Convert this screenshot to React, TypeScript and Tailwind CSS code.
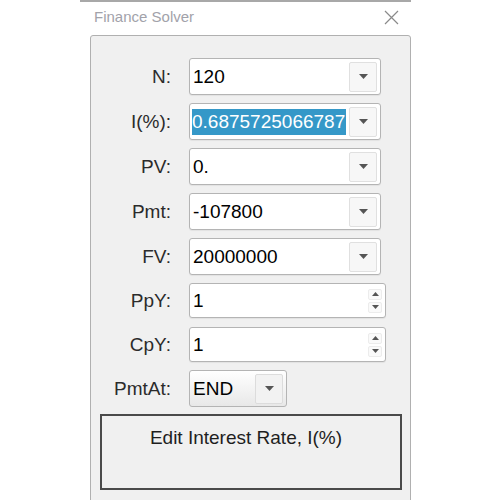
import React from 'react';

const Caret = ({ up = false, w = 9, h = 5 }: { up?: boolean; w?: number; h?: number }) => (
  <svg width={w} height={h} viewBox={`0 0 ${w} ${h}`}>
    <polygon points={up ? `0,${h} ${w},${h} ${w / 2},0` : `0,0 ${w},0 ${w / 2},${h}`} fill="#555" />
  </svg>
);

const Label = ({ text }: { text: string }) => (
  <div className="w-[80px] text-right text-[19px] leading-none text-[#2b2b2b]">{text}</div>
);

const DropField = ({ label, value, selected = false }: { label: string; value: string; selected?: boolean }) => (
  <div className="flex items-center h-[37px]">
    <Label text={label} />
    <div className="ml-[18px] h-[37px] w-[192px] bg-white border border-[#b4b4b4] rounded-[3px] shadow-[0_1px_1px_rgba(0,0,0,0.06)] flex items-center pl-[2px] pr-[3px]">
      <div className="flex-1 mr-[3px] overflow-hidden whitespace-nowrap text-[19px] leading-none text-black">
        {selected ? (
          <div className="h-[26px] bg-[#3598c8] text-white flex items-center overflow-hidden">{value}</div>
        ) : (
          <div className="pl-[1px]">{value}</div>
        )}
      </div>
      <div className="w-[28px] h-[30px] bg-[#f7f7f7] border border-[#e0e0e0] rounded-[2px] flex items-center justify-center">
        <Caret />
      </div>
    </div>
  </div>
);

const SpinField = ({ label, value }: { label: string; value: string }) => (
  <div className="flex items-center h-[35px]">
    <Label text={label} />
    <div className="ml-[18px] h-[35px] w-[197px] bg-white border border-[#b4b4b4] rounded-[3px] shadow-[0_1px_1px_rgba(0,0,0,0.06)] flex items-center pl-[3px] pr-[3px]">
      <div className="flex-1 text-[19px] leading-none text-black">{value}</div>
      <div className="w-[14px] flex flex-col gap-[2px]">
        <div className="h-[11px] border border-[#ececec] rounded-[2px] bg-[#fafafa] flex items-center justify-center">
          <Caret up w={7} h={4} />
        </div>
        <div className="h-[11px] border border-[#ececec] rounded-[2px] bg-[#fafafa] flex items-center justify-center">
          <Caret w={7} h={4} />
        </div>
      </div>
    </div>
  </div>
);

export default function App() {
  return (
    <div className="w-[500px] h-[500px] bg-white overflow-hidden font-['Liberation_Sans',Arial,sans-serif]">
      <div className="ml-[80px] w-[331px] border-t-2 border-[#a8a8a8]">
        <div className="h-[33px] flex items-center justify-between pl-[14px] pr-[12px] pb-[3px]">
          <span className="text-[15px] text-[#a2a2aa]">Finance Solver</span>
          <svg width="15" height="15" viewBox="0 0 15 15">
            <path d="M1 1 L14 14 M14 1 L1 14" stroke="#8a8a8a" strokeWidth="1.2" fill="none" />
          </svg>
        </div>
        <div className="ml-[10px] h-[470px] border border-[#b0b0b0] rounded-t-[3px] bg-[#f0f0f0] pt-[22px]">
          <div className="flex flex-col gap-2">
            <DropField label="N:" value="120" />
            <DropField label="I(%):" value="0.6875725066787" selected />
            <DropField label="PV:" value="0." />
            <DropField label="Pmt:" value="-107800" />
            <DropField label="FV:" value="20000000" />
            <SpinField label="PpY:" value="1" />
            <div className="mt-[1px]">
              <SpinField label="CpY:" value="1" />
            </div>
            <div className="flex items-center h-[37px]">
              <Label text="PmtAt:" />
              <div className="ml-[18px] h-[37px] w-[98px] border border-[#b4b4b4] rounded-[3px] bg-gradient-to-b from-white to-[#e8e8e8] flex items-center pl-[3px] pr-[3px]">
                <div className="flex-1 text-[19px] leading-none text-black">END</div>
                <div className="w-[28px] h-[30px] bg-[#f2f2f2] border border-[#dcdcdc] rounded-[2px] flex items-center justify-center">
                  <Caret />
                </div>
              </div>
            </div>
          </div>
          <div className="ml-[9px] mt-[7px] w-[302px] h-[76px] border-2 border-[#4a4a4a] pt-[12px] pr-[10px] text-center text-[19px] leading-none text-[#1e1e1e]">
            Edit Interest Rate, I(%)
          </div>
        </div>
      </div>
    </div>
  );
}
